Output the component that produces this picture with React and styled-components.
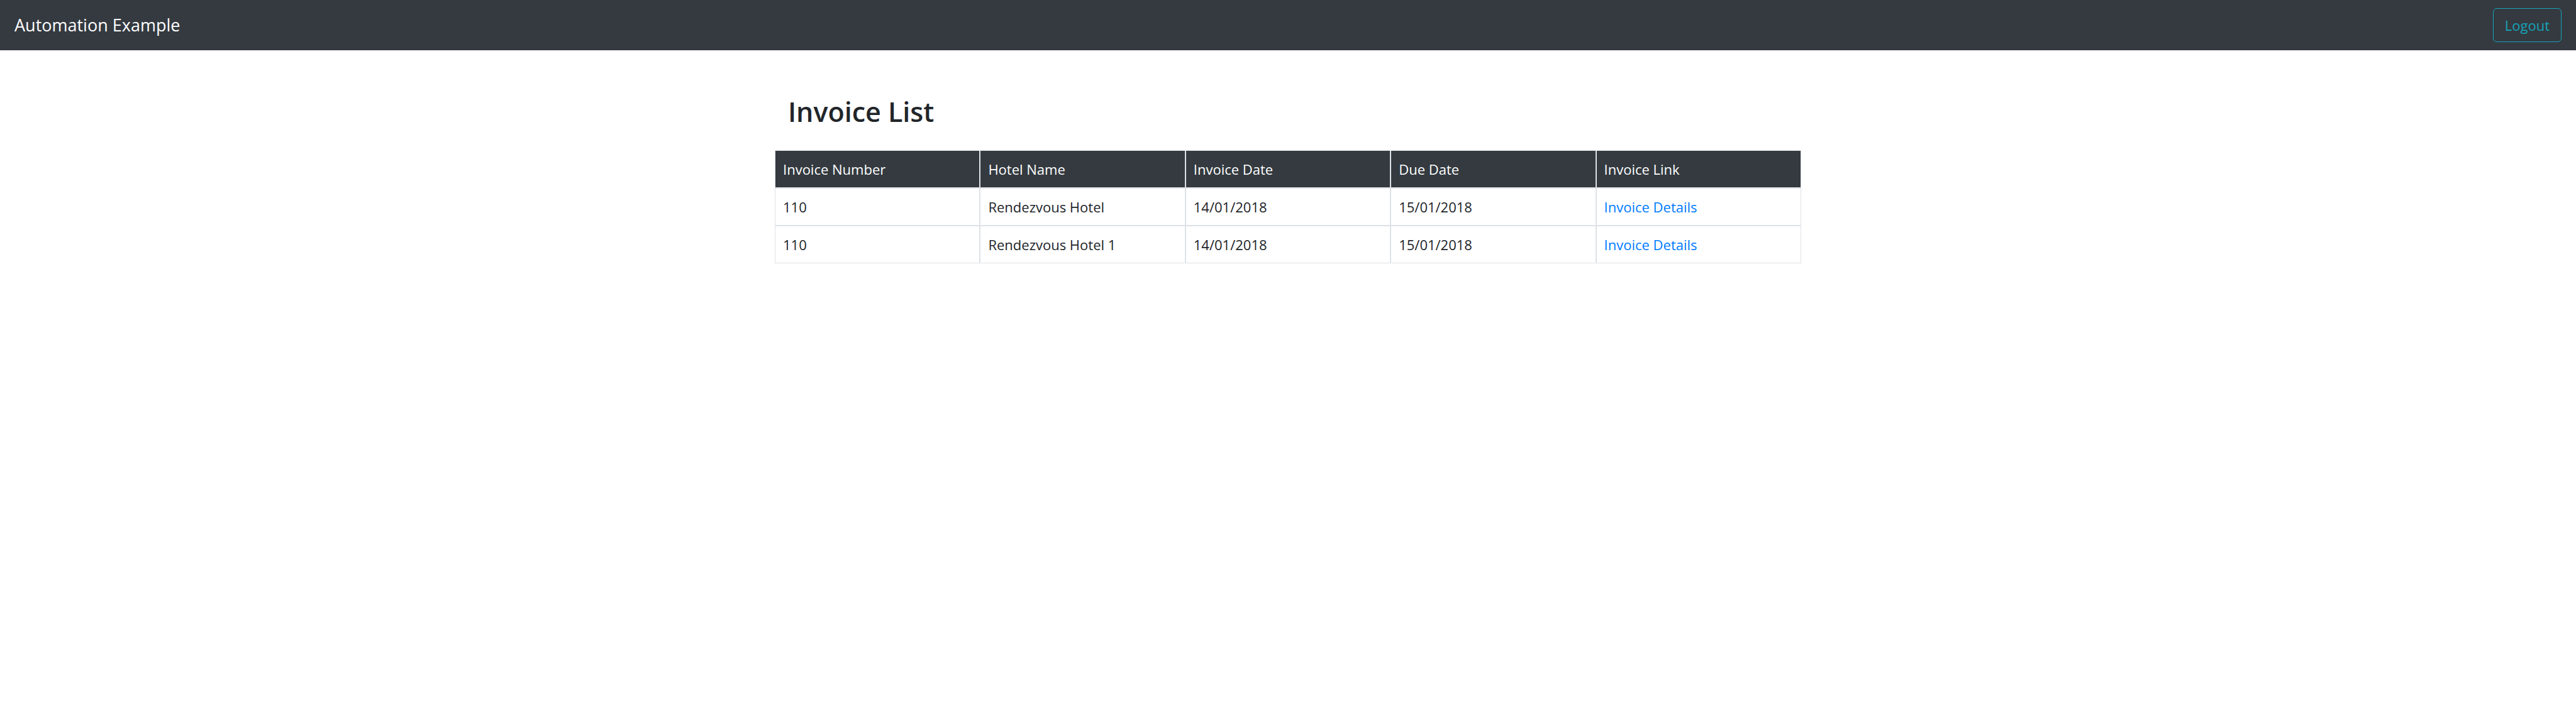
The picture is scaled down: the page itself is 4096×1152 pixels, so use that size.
import React from "react";
import styled, { createGlobalStyle } from "styled-components";

const GlobalStyle = createGlobalStyle`
  *, *::before, *::after {
    box-sizing: border-box;
  }

  body {
    margin: 0;
    background: #fff;
    color: #212529;
    font-family: "Open Sans", "Noto Sans", sans-serif;
    font-size: 22px;
    line-height: 34px;
  }
`;

const Navbar = styled.nav`
  display: flex;
  align-items: center;
  justify-content: space-between;
  padding: 13px 23px;
  background: #343a40;
`;

const Brand = styled.a`
  color: #fff;
  font-size: 27px;
  line-height: 42px;
  text-decoration: none;
  white-space: nowrap;
`;

const OutlineButton = styled.button`
  padding: 9px 18px;
  border: 1px solid #17a2b8;
  border-radius: 6px;
  background: transparent;
  color: #17a2b8;
  font: inherit;
  cursor: pointer;

  &:hover {
    background: #17a2b8;
    color: #fff;
  }
`;

const Container = styled.main`
  max-width: 1632px;
  margin: 0 auto;
  padding-top: 72px;
`;

const Title = styled.h2`
  margin: 0 0 35px;
  padding: 0 21px;
  font-size: 43px;
  font-weight: 600;
  line-height: 52px;
`;

const Table = styled.table`
  width: 100%;
  table-layout: fixed;
  border-collapse: separate;
  border-spacing: 0;
`;

const Cell = styled.td`
  padding: 12px;
  border: 1px solid #dee2e6;
  text-align: left;
  font-weight: 400;
`;

const HeadCell = styled(Cell)`
  background: #343a40;
  color: #fff;
`;

const DetailsLink = styled.a`
  color: #007bff;
  text-decoration: none;

  &:hover {
    color: #0056b3;
    text-decoration: underline;
  }
`;

const columns = ["Invoice Number", "Hotel Name", "Invoice Date", "Due Date", "Invoice Link"];

const invoices = [
  { id: 0, number: "110", hotel: "Rendezvous Hotel", date: "14/01/2018", due: "15/01/2018" },
  { id: 1, number: "110", hotel: "Rendezvous Hotel 1", date: "14/01/2018", due: "15/01/2018" },
];

export default function App() {
  return (
    <>
      <GlobalStyle />
      <Navbar>
        <Brand href="#">Automation Example</Brand>
        <OutlineButton type="button">Logout</OutlineButton>
      </Navbar>
      <Container>
        <Title id="invoice-list-title">Invoice List</Title>
        <Table aria-labelledby="invoice-list-title">
          <thead>
            <tr>
              {columns.map((column) => (
                <HeadCell as="th" scope="col" key={column}>
                  {column}
                </HeadCell>
              ))}
            </tr>
          </thead>
          <tbody>
            {invoices.map((invoice) => (
              <tr key={invoice.id}>
                <Cell>{invoice.number}</Cell>
                <Cell>{invoice.hotel}</Cell>
                <Cell>{invoice.date}</Cell>
                <Cell>{invoice.due}</Cell>
                <Cell>
                  <DetailsLink href={`#invoice-${invoice.id}`}>Invoice Details</DetailsLink>
                </Cell>
              </tr>
            ))}
          </tbody>
        </Table>
      </Container>
    </>
  );
}
